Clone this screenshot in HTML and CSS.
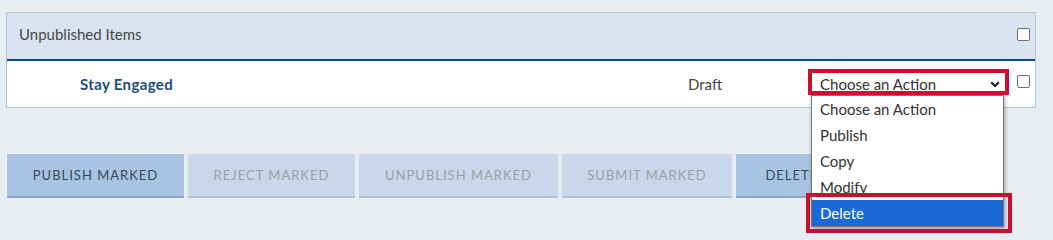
FILE: index.html
```html
<!DOCTYPE html>
<html>
<head>
<meta charset="utf-8">
<link rel="stylesheet" href="styles.css">
</head>
<body>
<div class="page">
  <div class="panel">
    <div class="panel-head">
      <span class="head-title">Unpublished Items</span>
      <span class="checkbox"></span>
    </div>
    <div class="row">
      <span class="item-title">Stay Engaged</span>
      <span class="status">Draft</span>
      <div class="action">
        <div class="select">
          <span>Choose an Action</span>
          <svg class="chev" width="10" height="7" viewBox="0 0 10 7"><path d="M1.2 1.3 L5 5 L8.8 1.3" fill="none" stroke="#222" stroke-width="2.2"/></svg>
        </div>
        <div class="mark mark-select"></div>
        <ul class="options">
          <li>Choose an Action</li>
          <li>Publish</li>
          <li>Copy</li>
          <li>Modify</li>
          <li class="selected">Delete</li>
        </ul>
        <div class="mark mark-delete"></div>
      </div>
      <span class="checkbox row-check"></span>
    </div>
  </div>
  <div class="buttons">
    <button class="btn primary w-publish">PUBLISH MARKED</button>
    <button class="btn disabled w-reject">REJECT MARKED</button>
    <button class="btn disabled w-unpublish">UNPUBLISH MARKED</button>
    <button class="btn disabled w-submit">SUBMIT MARKED</button>
    <button class="btn primary w-delete">DELETE MARKED</button>
  </div>
</div>
</body>
</html>
```
FILE: styles.css
```css
html, body {
  margin: 0;
  padding: 0;
  background: #e8edf2;
  font-family: "Lato", "Liberation Sans", sans-serif;
}
body { min-height: 240px; }
.page {
  padding: 12px 0 0 6px;
  width: 1030px;
  min-height: 228px;
}
.panel {
  border: 1px solid #b3c5dc;
  background: #fff;
}
.panel-head {
  height: 48px;
  box-sizing: border-box;
  background: #dae4f0;
  border-bottom: 2px solid #0f4e80;
  display: flex;
  align-items: center;
  justify-content: space-between;
  padding: 0 5px 4px 12px;
}
.head-title {
  font-size: 15px;
  color: #474747;
}
.checkbox {
  width: 11px;
  height: 11px;
  border: 1px solid #707070;
  border-radius: 2px;
  background: #fff;
  display: inline-block;
  flex: none;
}
.row {
  height: 46px;
  display: flex;
  align-items: center;
}
.item-title {
  margin-left: 73px;
  font-size: 15px;
  font-weight: bold;
  letter-spacing: 0.35px;
  color: #1c4e7b;
  width: 608px;
  flex: none;
}
.status {
  font-size: 15px;
  color: #444;
  width: 123px;
  flex: none;
}
.action {
  position: relative;
  width: 194px;
  margin-right: 12px;
  flex: none;
}
.row-check { margin-bottom: 5px; }
.select {
  height: 24px;
  box-sizing: border-box;
  background: #fff;
  display: flex;
  align-items: center;
  justify-content: space-between;
  padding: 0 5px 0 9px;
  font-size: 15px;
  color: #333;
  box-shadow: 0 1px 3px rgba(0,0,0,0.25);
}
.chev { display: block; }
.mark {
  position: absolute;
  border: 4px solid #c8102e;
  pointer-events: none;
}
.mark-select {
  left: -3px;
  top: -3px;
  width: 193px;
  height: 18px;
  z-index: 3;
}
.options {
  position: absolute;
  left: 0;
  top: 23px;
  width: 191px;
  margin: 0;
  padding: 0;
  list-style: none;
  background: #fff;
  border: 1px solid #777;
  box-shadow: 1px 2px 4px rgba(0,0,0,0.35);
  z-index: 2;
}
.options li {
  height: 26px;
  line-height: 26px;
  padding-left: 8px;
  font-size: 15px;
  color: #333;
}
.options li.selected {
  background: #1a69d4;
  color: #fff;
}
.mark-delete {
  left: -5px;
  top: 121px;
  width: 198px;
  height: 32px;
  z-index: 3;
}
.buttons {
  display: flex;
  gap: 4px;
  margin-top: 46px;
  margin-left: 1px;
}
.btn {
  height: 44px;
  border: none;
  border-bottom: 2px solid #8ea6c2;
  font-family: inherit;
  font-size: 13px;
  letter-spacing: 1px;
  padding: 0;
  flex: none;
}
.primary {
  background: #a8c4e2;
  color: #38465a;
}
.disabled {
  background: #c8d8ea;
  color: #9a9fa6;
  border-bottom-color: #b0c2d8;
}
.w-publish { width: 177px; }
.w-reject { width: 167px; }
.w-unpublish { width: 199px; }
.w-submit { width: 170px; }
.w-delete { width: 177px; }
```
